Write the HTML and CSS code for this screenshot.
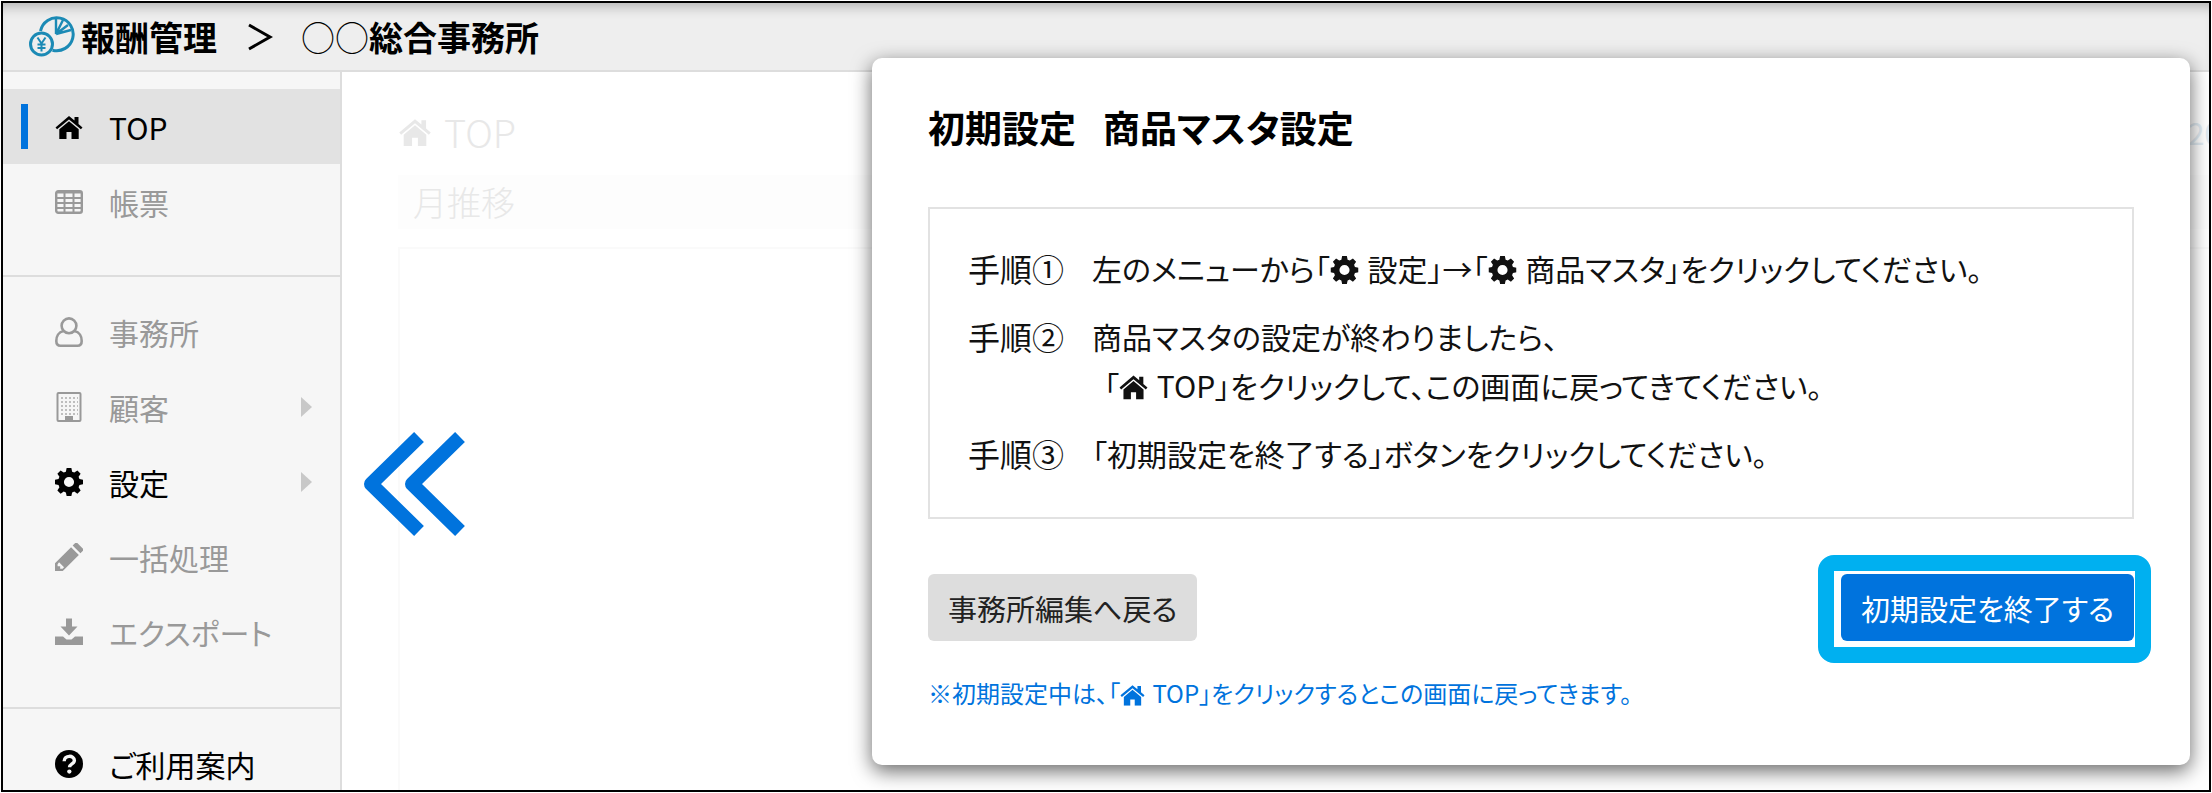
FILE: index.html
```html
<!DOCTYPE html>
<html lang="ja">
<head>
    <meta charset="UTF-8">
    <meta name="viewport" content="width=device-width, initial-scale=1.0">
    <title>報酬管理</title>
    <link rel="stylesheet" href="styles.css">
</head>
<body>
    <!-- shared icons -->
    <svg class="icon-defs" aria-hidden="true">
        <symbol id="icon-home" viewBox="0 0 28 24">
            <path d="M14 1L0.5 12.4l1.6 1.9L14 4.4l11.9 9.9 1.6-1.9-4-3.4V2h-4v3.6z"/>
            <path d="M14 6.2L4.3 14.3V24h7.2v-7h5v7h7.2v-9.7z"/>
        </symbol>
        <symbol id="icon-gear" viewBox="0 0 26 26">
            <path fill-rule="evenodd" d="M10.8 0h4.4l.7 3.4 2 .8 2.9-1.9 3 3-1.9 2.9.8 2 3.3.7v4.3l-3.3.7-.8 2 1.9 2.9-3 3-2.9-1.9-2 .8-.7 3.3h-4.4l-.7-3.3-2-.8-2.9 1.9-3-3 1.9-2.9-.8-2-3.3-.7v-4.3l3.3-.7.8-2-1.9-2.9 3-3 2.9 1.9 2-.8zM13 8.3a4.7 4.7 0 1 0 0 9.4 4.7 4.7 0 0 0 0-9.4z"/>
        </symbol>
    </svg>

    <div class="app">
        <header class="header">
            <svg class="logo" viewBox="0 0 46 41" fill="none" stroke="#1b8ab5" stroke-width="3">
                <path d="M11.500 15A16.500 16.500 0 1 1 23.500 34.200"/>
                <path d="M27 2v16L34 4M27 18l12-9M27 18l15-4" stroke-width="2.400"/>
                <circle cx="12.5" cy="28" r="11"/>
                <path d="M8.500 21.500l4 6 4-6M12.500 27.500v8M8.500 28.500h8M8.500 32h8" stroke-width="2"/>
            </svg>
            <span class="brand">報酬管理</span>
            <svg class="crumb" viewBox="0 0 26 28" fill="none" stroke="#000" stroke-width="3"><path d="M2 2l21 12L2 26"/></svg>
            <span class="office"><span class="circles">○○</span>総合事務所</span>
        </header>

        <div class="body">
            <nav class="sidebar">
                <ul class="menu">
                    <li><a href="#" class="item current">
                        <svg class="icon" viewBox="0 0 28 24"><use href="#icon-home"/></svg>TOP
                    </a></li>
                    <li><a href="#" class="item muted">
                        <svg class="icon" viewBox="0 0 28 24" fill="none" stroke="currentColor" stroke-width="2.400"><rect x="1.200" y="1.200" width="25.600" height="21.600" rx="2"/><path d="M1 2.500h26M1 8h26M1 13h26M1 18h26M9.500 3v20M18.500 3v20" stroke-width="2"/></svg>帳票
                    </a></li>
                </ul>
                <ul class="menu">
                    <li><a href="#" class="item muted">
                        <svg class="icon" viewBox="0 0 28 30" fill="none" stroke="currentColor" stroke-width="2.600"><circle cx="14" cy="8.800" r="7.400"/><path d="M8.500 14C3.500 15 1.300 19.500 1.300 24c0 3 1.700 4.700 4.200 4.700h17c2.500 0 4.200-1.700 4.200-4.700 0-4.500-2.200-9-7.200-10"/></svg>事務所
                    </a></li>
                    <li><a href="#" class="item muted">
                        <svg class="icon" viewBox="0 0 28 30" fill="none" stroke="currentColor"><rect x="2.500" y="1" width="23" height="28" rx="1" stroke-width="2"/><path d="M6 6h17M6 10h17M6 14h17M6 18h17M6 22h17" stroke-width="2" stroke-dasharray="2 2" opacity=".6"/><path d="M10 28v-4h8v4z" fill="currentColor" stroke="none"/></svg>顧客
                        <span class="arrow"></span>
                    </a></li>
                    <li><a href="#" class="item">
                        <svg class="icon" viewBox="0 0 26 26"><use href="#icon-gear"/></svg>設定
                        <span class="arrow"></span>
                    </a></li>
                    <li><a href="#" class="item muted">
                        <svg class="icon" viewBox="0 0 27 27"><path d="M0 27v-7.500L15.500 4l7.500 7.500L7.500 27zM2.500 20.500v2H5v2.300h2.300l1.400-1.400-4.800-4.800zM17 2.500L19.500 0h2L27 5.500v2L24.500 10z" fill-rule="evenodd"/></svg>一括処理
                    </a></li>
                    <li><a href="#" class="item muted">
                        <svg class="icon" viewBox="0 0 28 27"><path d="M11 0h6v8h5.500L14 17 5.500 8H11z"/><path d="M0 18h8l3.500 3h5l3.500-3h8v8.500H0z"/></svg>エクスポート
                    </a></li>
                </ul>
                <ul class="menu">
                    <li><a href="#" class="item">
                        <svg class="icon" viewBox="0 0 26 26"><circle cx="13" cy="13" r="13"/><path d="M8.500 10.500c0-6 9.500-6 9.500-.8 0 3.300-4.500 3-4.500 6.300" fill="none" stroke="#f6f6f6" stroke-width="3.200"/><circle cx="13.300" cy="20" r="2" fill="#f6f6f6"/></svg>ご利用案内
                    </a></li>
                </ul>
            </nav>

            <main class="main">
                <div class="page-head">
                    <h1 class="page-title"><svg class="title-icon" viewBox="0 0 28 24"><use href="#icon-home"/></svg>TOP</h1>
                    <span class="year">20</span>
                </div>
                <h2 class="section-title">月推移</h2>
                <div class="chart"></div>
            </main>
        </div>

        <svg class="pointer" viewBox="0 0 104 104" fill="none" stroke="#0073dd" stroke-width="14" stroke-linejoin="round"><path d="M58 5L10 52l48 47M99 5L51 52l48 47"/></svg>

        <section class="dialog" role="dialog" aria-labelledby="dialog-title">
            <h2 class="dialog-title" id="dialog-title">初期設定&ensp; 商品マスタ設定</h2>
            <dl class="steps">
                <dt>手順①</dt>
                <dd>左のメニューから「<svg class="inline-icon" viewBox="0 0 26 26"><use href="#icon-gear"/></svg> 設定」→「<svg class="inline-icon" viewBox="0 0 26 26"><use href="#icon-gear"/></svg> 商品マスタ」をクリックしてください。</dd>
                <dt>手順②</dt>
                <dd>商品マスタの設定が終わりましたら、<br><span class="indent">「<svg class="inline-icon" viewBox="0 0 28 24"><use href="#icon-home"/></svg> TOP」をクリックして、この画面に戻ってきてください。</span></dd>
                <dt>手順③</dt>
                <dd>「初期設定を終了する」ボタンをクリックしてください。</dd>
            </dl>
            <div class="actions">
                <button type="button" class="btn">事務所編集へ戻る</button>
                <button type="button" class="btn btn-primary">初期設定を終了する</button>
            </div>
            <p class="note">※初期設定中は、「<svg class="inline-icon" viewBox="0 0 28 24"><use href="#icon-home"/></svg> TOP」をクリックするとこの画面に戻ってきます。</p>
        </section>
    </div>
</body>
</html>
```
FILE: styles.css
```css
* {
    box-sizing: border-box;
}
body {
    display: flex;
    height: 100vh;
    margin: 0;
    padding: 1px;
    background: #fff;
    color: #111;
    font-family: "Noto Sans CJK JP", sans-serif;
    font-feature-settings: "palt";
}
svg {
    fill: currentColor;
    flex: none;
}
svg[fill="none"] {
    fill: none;
}
.icon-defs {
    position: absolute;
    width: 0;
    height: 0;
}
.app {
    position: relative;
    flex: 1;
    display: flex;
    flex-direction: column;
    border: 2px solid #000;
    overflow: hidden;
}

/* header */
.header {
    flex: none;
    display: flex;
    align-items: center;
    padding: 9px 26px;
    background: #eee;
    border-bottom: 2px solid #ddd;
    box-shadow: inset 0 12px 12px -8px rgba(0, 0, 0, 0.25);
    color: #000;
    font-size: 34px;
    font-weight: bold;
    line-height: 49px;
}
.logo {
    width: 46px;
    height: 41px;
    margin-right: 6px;
}
.crumb {
    width: 26px;
    height: 28px;
    margin: 0 28px 0 30px;
}
.circles {
    font-weight: 300;
    font-feature-settings: normal;
}

/* sidebar */
.body {
    flex: 1;
    display: flex;
    min-height: 0;
}
.sidebar {
    width: 339px;
    background: #f6f6f6;
    border-right: 2px solid #ddd;
}
.menu {
    list-style: none;
    margin: 0;
    padding: 17px 0 36px;
    border-bottom: 2px solid #ddd;
}
.menu + .menu {
    padding: 17px 0 38px;
}
.menu:last-child {
    border-bottom: none;
}
.item {
    position: relative;
    display: flex;
    align-items: center;
    gap: 26px;
    height: 75px;
    padding: 0 28px 0 52px;
    color: #000;
    font-size: 30px;
    text-decoration: none;
}
.current {
    background: #e2e2e2;
}
.current::before {
    content: "";
    position: absolute;
    left: 18px;
    width: 7px;
    height: 45px;
    background: #0073dd;
}
.muted {
    color: #999;
}
.icon {
    width: 28px;
    height: 30px;
}
.arrow {
    margin-left: auto;
    border-left: 11px solid #c8c8c8;
    border-top: 10px solid transparent;
    border-bottom: 10px solid transparent;
}

/* faded page behind the dialog */
.main {
    flex: 1;
    display: flex;
    flex-direction: column;
    padding: 32px 0 0 56px;
    color: #e8e8e8;
}
.page-head {
    display: flex;
    justify-content: space-between;
}
.page-title {
    display: flex;
    align-items: center;
    gap: 12px;
    margin: 0;
    font-size: 38px;
    font-weight: 300;
    line-height: 56px;
}
.title-icon {
    width: 34px;
    height: 28px;
}
.year {
    margin-right: -12px;
    color: #e2ecf3;
    font-size: 30px;
    line-height: 56px;
}
.section-title {
    margin: 15px 0 18px;
    padding: 0 15px;
    background: #fdfdfd;
    font-size: 34px;
    font-weight: 300;
    line-height: 54px;
}
.chart {
    flex: 1;
    border: solid #fafafa;
    border-width: 2px 0 0 2px;
}
.pointer {
    position: absolute;
    top: 429px;
    left: 358px;
    width: 104px;
    height: 104px;
}

/* dialog */
.dialog {
    position: absolute;
    top: 55px;
    left: 869px;
    right: 19px;
    padding: 40px 56px 52px;
    background: #fff;
    border-radius: 10px;
    box-shadow: 0 6px 20px rgba(0, 0, 0, 0.6);
}
.dialog-title {
    margin: 0 0 51px;
    color: #000;
    font-size: 37px;
    line-height: 58px;
}
.steps {
    display: grid;
    grid-template-columns: 124px 1fr;
    row-gap: 19px;
    margin: 0 0 55px;
    padding: 35px 38px 39px;
    border: 2px solid #e2e2e2;
    font-size: 30px;
    line-height: 49px;
}
.steps dt {
    font-size: 32px;
}
.steps dd {
    margin: 0;
}
.indent {
    padding-left: 12px;
}
.inline-icon {
    width: 29px;
    height: 28px;
    margin-right: 2px;
    vertical-align: -3px;
}
.actions {
    display: flex;
    justify-content: space-between;
}
.btn {
    height: 67px;
    padding: 0 20px;
    border: none;
    border-radius: 6px;
    background: #ddd;
    color: #222;
    font: inherit;
    font-size: 29px;
    font-feature-settings: inherit;
    cursor: pointer;
}
.btn-primary {
    position: relative;
    background: #0073dd;
    color: #fff;
}
/* highlight ring */
.btn-primary::after {
    content: "";
    position: absolute;
    inset: -19px -17px -22px -23px;
    border: 16px solid #00b0f0;
    border-radius: 16px;
}
.note {
    margin: 32px 0 0;
    color: #0073dd;
    font-size: 24px;
    line-height: 40px;
}
.note .inline-icon {
    width: 25px;
    height: 22px;
}
```
